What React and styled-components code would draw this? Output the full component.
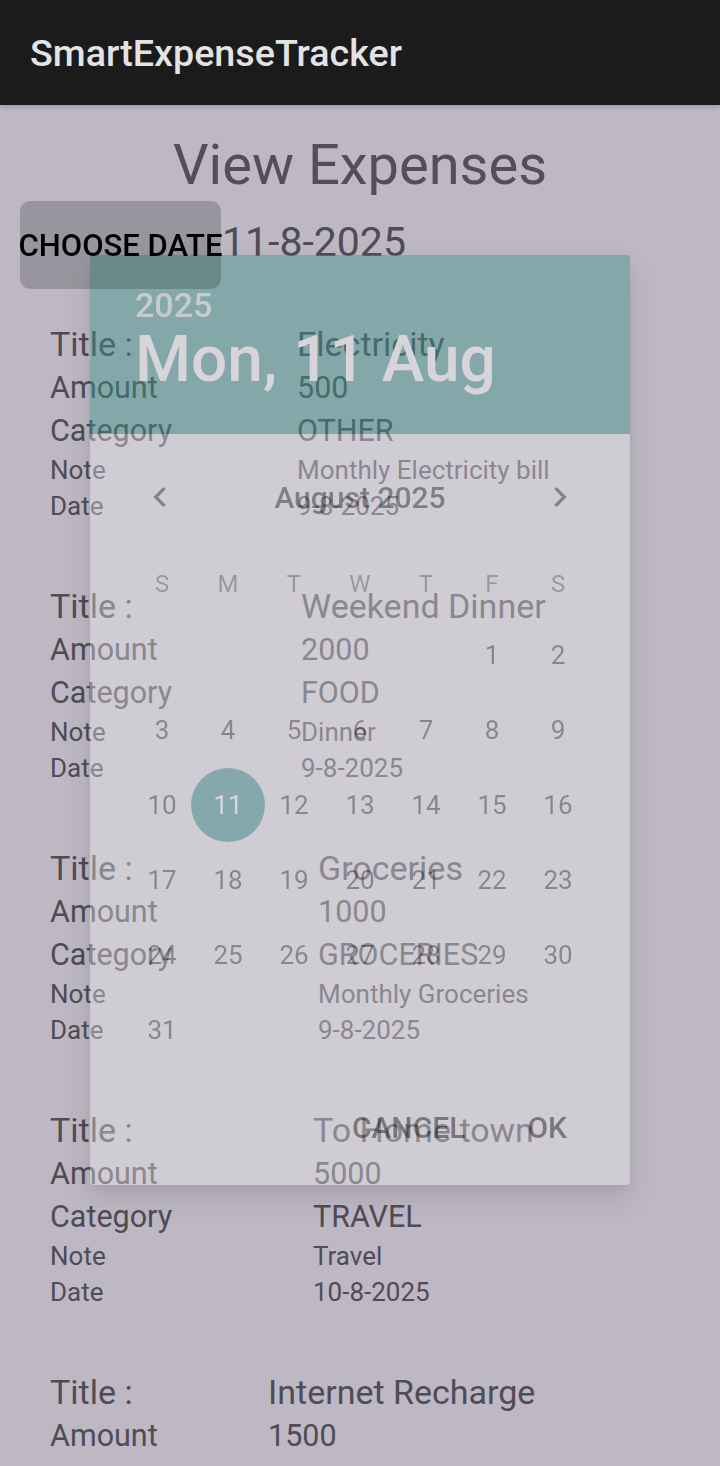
import React from 'react';
import styled, { createGlobalStyle } from 'styled-components';

const GlobalStyle = createGlobalStyle`
  html, body {
    margin: 0;
    padding: 0;
    background: #bdb8c3;
    font-family: Roboto, "Noto Sans", "Liberation Sans", sans-serif;
  }
  * { box-sizing: border-box; }
`;

// Page behind the dialog
const Screen = styled.div`
  width: 720px;
  height: 1466px;
  overflow: hidden;
  background: #bdb8c3;
  color: #504c55;
`;

const TopBar = styled.header`
  height: 105px;
  background: #1b1b1b;
  display: flex;
  align-items: center;
  padding-left: 30px;
  box-shadow: 0 2px 5px rgba(0, 0, 0, 0.18);
  position: relative;
`;

const AppTitle = styled.h1`
  margin: 0;
  font-size: 37.7px;
  font-weight: 500;
  color: #e3e3e3;
`;

const Content = styled.main`
  display: flex;
  flex-direction: column;
`;

const Heading = styled.h2`
  margin: 27px 0 0;
  text-align: center;
  font-size: 56px;
  line-height: 66px;
  font-weight: 400;
  color: #534f58;
`;

const DateRow = styled.div`
  display: flex;
  align-items: center;
  margin-top: 3px;
  padding-left: 20px;
`;

const ChooseButton = styled.button`
  position: relative;
  z-index: 20;
  width: 201px;
  height: 88px;
  border: none;
  border-radius: 10px;
  background: rgba(0, 0, 0, 0.19);
  color: #000;
  font-family: Roboto, sans-serif;
  font-size: 31px;
  font-weight: 500;
  padding: 0;
  display: flex;
  align-items: center;
  justify-content: center;
  white-space: nowrap;
`;

const SelectedDate = styled.span`
  font-size: 41px;
  line-height: 46px;
  margin-left: 1px;
  margin-bottom: 7px;
  color: #504c55;
`;

const List = styled.section`
  margin-top: 33px;
  padding-left: 50px;
`;

const Entry = styled.div`
  display: grid;
  grid-template-columns: ${p => p.$labelWidth}px auto;
  margin-bottom: 60px;
`;

const sizes = {
  title: { font: 34, line: 44 },
  big: { font: 30.5, line: 43 },
  small: { font: 26, line: 36 },
};

const Cell = styled.div`
  font-size: ${p => sizes[p.$size].font}px;
  line-height: ${p => sizes[p.$size].line}px;
  white-space: nowrap;
`;

// Date picker dialog
const Dialog = styled.div`
  position: fixed;
  left: 90px;
  top: 255px;
  width: 540px;
  height: 930px;
  z-index: 10;
  border-radius: 4px;
  overflow: hidden;
  display: flex;
  flex-direction: column;
  box-shadow: 0 14px 30px rgba(0, 0, 0, 0.1), 0 4px 12px rgba(0, 0, 0, 0.06);
`;

const DialogHeader = styled.div`
  height: 179px;
  flex-shrink: 0;
  background: rgba(60, 148, 140, 0.44);
  padding: 30px 45px 0;
`;

const HeaderYear = styled.div`
  font-size: 34px;
  line-height: 40px;
  font-weight: 500;
  color: #c8cbce;
`;

const HeaderDate = styled.div`
  font-size: 64px;
  line-height: 70px;
  font-weight: 500;
  color: #d7d4da;
  white-space: nowrap;
`;

const DialogBody = styled.div`
  flex: 1;
  display: flex;
  flex-direction: column;
  background: rgba(240, 240, 241, 0.37);
`;

const MonthNav = styled.div`
  margin-top: 33px;
  height: 60px;
  display: flex;
  align-items: center;
  justify-content: space-between;
  padding: 0 50px;
`;

const MonthLabel = styled.span`
  font-size: 30px;
  font-weight: 500;
  color: rgba(0, 0, 0, 0.38);
`;

const NavIcon = styled.svg`
  width: 40px;
  height: 40px;
  fill: rgba(0, 0, 0, 0.36);
`;

const Week = styled.div`
  display: grid;
  grid-template-columns: repeat(7, 66px);
  justify-content: center;
  margin-top: ${p => p.$top}px;
`;

const WeekDay = styled.div`
  height: 50px;
  display: flex;
  align-items: center;
  justify-content: center;
  font-size: 24px;
  color: rgba(0, 0, 0, 0.26);
`;

const Day = styled.div`
  height: 75px;
  display: flex;
  align-items: center;
  justify-content: center;
  font-size: 26px;
  color: ${p => (p.$selected ? '#d9d7dd' : 'rgba(0, 0, 0, 0.34)')};
`;

const SelectedCircle = styled.span`
  width: 74px;
  height: 74px;
  border-radius: 50%;
  background: #84a8ab;
  display: flex;
  align-items: center;
  justify-content: center;
  flex-shrink: 0;
`;

const Actions = styled.div`
  margin-top: auto;
  height: 60px;
  margin-bottom: 28px;
  display: flex;
  justify-content: flex-end;
  align-items: center;
  gap: 30px;
  padding-right: 47px;
`;

const TextButton = styled.button`
  border: none;
  background: none;
  padding: 0 16px;
  font-family: Roboto, sans-serif;
  font-size: 30px;
  font-weight: 500;
  color: rgba(0, 0, 0, 0.42);
`;

const expenses = [
  { labelWidth: 247, title: 'Electricity', amount: '500', category: 'OTHER', note: 'Monthly Electricity bill', date: '9-8-2025' },
  { labelWidth: 251, title: 'Weekend Dinner', amount: '2000', category: 'FOOD', note: 'Dinner', date: '9-8-2025' },
  { labelWidth: 268, title: 'Groceries', amount: '1000', category: 'GROCERIES', note: 'Monthly Groceries', date: '9-8-2025' },
  { labelWidth: 263, title: 'To Home town', amount: '5000', category: 'TRAVEL', note: 'Travel', date: '10-8-2025' },
  { labelWidth: 218, title: 'Internet Recharge', amount: '1500', category: 'BILLS', note: 'Internet', date: '10-8-2025' },
];

const weekDays = ['S', 'M', 'T', 'W', 'T', 'F', 'S'];

// August 2025 starts on a Friday
const calendarCells = [...Array(5).fill(null), ...Array.from({ length: 31 }, (_, i) => i + 1)];

const ExpenseEntry = ({ expense }) => {
  const rows = [
    ['title', 'Title :', expense.title],
    ['big', 'Amount', expense.amount],
    ['big', 'Category', expense.category],
    ['small', 'Note', expense.note],
    ['small', 'Date', expense.date],
  ];
  return (
    <Entry $labelWidth={expense.labelWidth}>
      {rows.map(([size, label, value]) => (
        <React.Fragment key={label}>
          <Cell $size={size}>{label}</Cell>
          <Cell $size={size}>{value}</Cell>
        </React.Fragment>
      ))}
    </Entry>
  );
};

const DatePickerDialog = () => (
  <Dialog>
    <DialogHeader>
      <HeaderYear>2025</HeaderYear>
      <HeaderDate>Mon, 11 Aug</HeaderDate>
    </DialogHeader>
    <DialogBody>
      <MonthNav>
        <NavIcon viewBox="0 0 24 24">
          <path d="M15.41 7.41L14 6l-6 6 6 6 1.41-1.41L10.83 12z" />
        </NavIcon>
        <MonthLabel>August 2025</MonthLabel>
        <NavIcon viewBox="0 0 24 24">
          <path d="M8.59 16.59L10 18l6-6-6-6-1.41 1.41L13.17 12z" />
        </NavIcon>
      </MonthNav>
      <Week $top={32}>
        {weekDays.map((d, i) => (
          <WeekDay key={i}>{d}</WeekDay>
        ))}
      </Week>
      <Week $top={8}>
        {calendarCells.map((d, i) =>
          d === 11 ? (
            <Day key={i} $selected>
              <SelectedCircle>11</SelectedCircle>
            </Day>
          ) : (
            <Day key={i}>{d}</Day>
          )
        )}
      </Week>
      <Actions>
        <TextButton>CANCEL</TextButton>
        <TextButton>OK</TextButton>
      </Actions>
    </DialogBody>
  </Dialog>
);

const App = () => (
  <>
    <GlobalStyle />
    <Screen>
      <TopBar>
        <AppTitle>SmartExpenseTracker</AppTitle>
      </TopBar>
      <Content>
        <Heading>View Expenses</Heading>
        <DateRow>
          <ChooseButton>CHOOSE DATE</ChooseButton>
          <SelectedDate>11-8-2025</SelectedDate>
        </DateRow>
        <List>
          {expenses.map(e => (
            <ExpenseEntry key={e.title} expense={e} />
          ))}
        </List>
      </Content>
    </Screen>
    <DatePickerDialog />
  </>
);

export default App;
